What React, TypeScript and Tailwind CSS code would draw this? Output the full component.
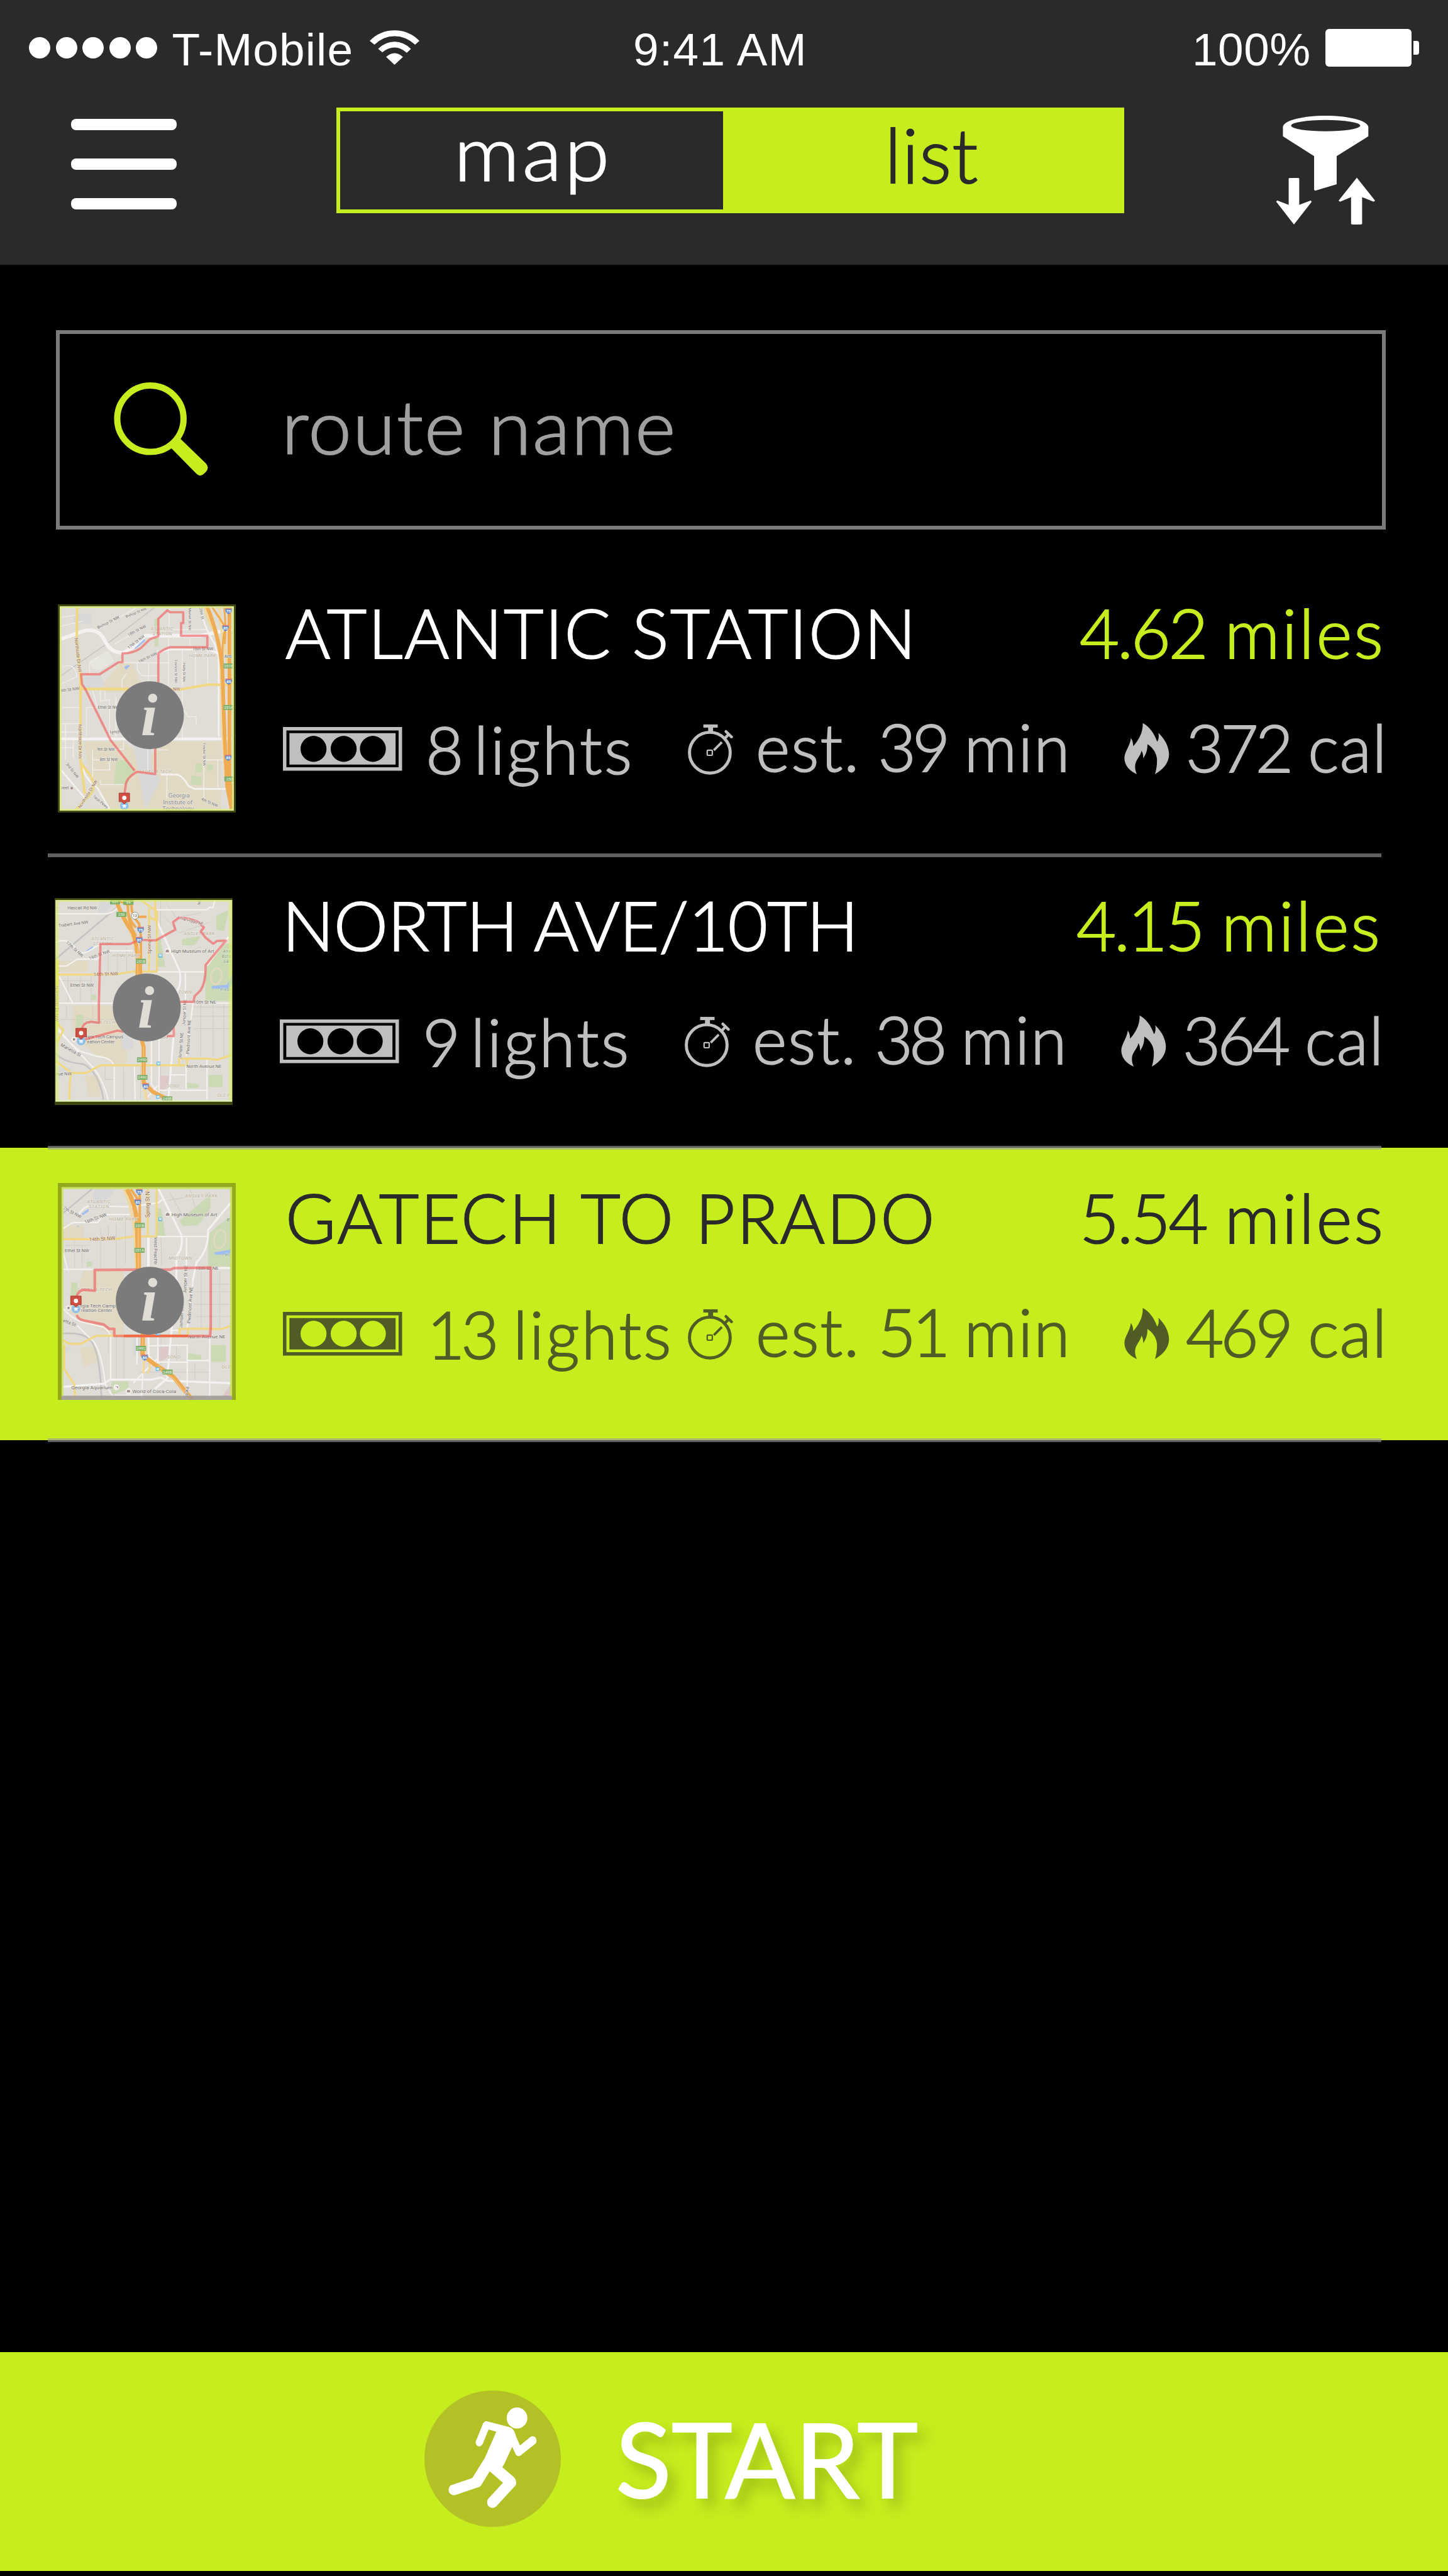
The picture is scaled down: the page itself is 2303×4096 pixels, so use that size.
import React from 'react';

const LATO = 'font-[Lato,sans-serif]';
const THIN = '[-webkit-text-stroke:2px_currentColor]';

/* ---------- icons ---------- */

function Wifi() {
  return (
    <svg className="h-[55px] w-[79px]" viewBox="781 165 106 198" preserveAspectRatio="none" fill="white">
      <path d="M781 226Q803 166 834 166Q865 166 887 226L878 248Q858 199 834 199Q810 199 791 248Z" />
      <path d="M799 272Q815 231 834 231Q853 231 869 272L860 295Q848 264 834 264Q820 264 808 292Z" />
      <path d="M816 318Q825 296 834 296Q843 296 852 318L834 363Z" />
    </svg>
  );
}

function FunnelSort() {
  return (
    <svg className="h-[173px] w-[158px]" viewBox="1209 653 207 614" preserveAspectRatio="none" fill="white">
      <path
        fillRule="evenodd"
        d="M1224 715C1226 680 1265 653 1313 653C1360 653 1400 680 1402 715V769L1336 881V1040L1291 1076L1289 1070V881L1224 769ZM1241 709A72 32 0 0 0 1385 709A72 32 0 0 0 1241 709Z"
      />
      <path d="M1236 1008Q1236 1004 1239 1004H1256Q1258 1004 1258 1008V1156L1282 1131L1284 1138L1247 1267L1210 1138L1212 1131L1236 1156Z" />
      <path d="M1378 1003L1416 1132L1413 1138L1389 1113V1263Q1389 1267 1386 1267H1369Q1366 1267 1366 1263V1113L1343 1138L1340 1132Z" />
    </svg>
  );
}

function Magnifier() {
  return (
    <svg className="h-[151px] w-[151px]" viewBox="245 825 205 205">
      <circle cx="324" cy="903.5" r="71.6" fill="none" stroke="#c6ed1e" strokeWidth="13.6" />
      <path fill="#c6ed1e" d="M389 947L444 1000Q452 1009 444 1018L440 1022Q432 1031 422 1021L369 967Z" />
    </svg>
  );
}

function TrafficLight() {
  return (
    <svg className="h-[69.5px] w-[189.5px]" viewBox="0 0 257 94" fill="currentColor">
      <path
        fillRule="evenodd"
        d="M0 0H257V94H0ZM7.5 7.5V86.5H249.500V7.5ZM14 13H243V81H14ZM38 47A28 28 0 0 0 94 47A28 28 0 0 0 38 47ZM103 47A28 28 0 0 0 159 47A28 28 0 0 0 103 47ZM166 47A28 28 0 0 0 222 47A28 28 0 0 0 166 47Z"
      />
    </svg>
  );
}

function Stopwatch() {
  return (
    <svg className="h-[88.4px] w-[88.4px]" viewBox="0 0 360 360" fill="none" stroke="currentColor">
      <circle cx="171" cy="207" r="132" strokeWidth="20" />
      <path d="M129 34.500H222" strokeWidth="21" />
      <path d="M176 40V75" strokeWidth="32" />
      <path d="M197 191L249 139" strokeWidth="15" />
      <rect x="154" y="191" width="33" height="33" rx="5" strokeWidth="9" />
      <path d="M268 115L291 90" strokeWidth="18" />
      <path d="M275 70L312 105" strokeWidth="18" strokeLinecap="round" />
    </svg>
  );
}

function Flame() {
  return (
    <svg className="h-[91.4px] w-[88.4px]" viewBox="0 0 360 372" fill="currentColor">
      <path d="M153 23C195 45 228 90 246 143C257 130 258 108 254 86C295 125 322 175 323 225C323 280 285 325 232 354C242 325 246 290 245 258C242 215 215 180 183 160C184 195 175 225 156 251C156 232 153 215 145 203C138 240 103 262 103 305C103 325 108 340 115 354C70 335 34 300 34 248C36 205 70 175 76 120C88 138 91 155 91 173C125 135 155 85 153 23Z" />
    </svg>
  );
}

function Runner() {
  return (
    <svg className="h-[217px] w-[217px]" viewBox="82.5 354 369 882" preserveAspectRatio="none">
      <ellipse cx="267" cy="795" rx="184.5" ry="441" fill="#b4c126" />
      <g fill="white">
        <ellipse cx="333" cy="532" rx="28" ry="68" />
        <path d="M250 552L314 592Q326 605 330 650L341 710L369 655Q377 643 383 658Q388 675 384 695L344 772Q337 787 330 770L320 718L298 832L293 850L325 915Q334 940 329 968L276 1105Q267 1122 257 1105Q249 1085 254 1057L295 950L259 876L238 960Q235 975 230 978L166 1030Q155 1034 149 1010Q146 985 153 968L212 920L246 790L277 620L256 606L240 700Q234 720 227 714Q219 700 222 680L241 568Q245 552 250 552Z" />
      </g>
    </svg>
  );
}

/* ---------- map thumbnails ---------- */

const WHITE = '#f3f2f0';
const YELLOW = '#f0d780';
const ORANGE = '#eeab52';

function Road({ d, w = 8, c = WHITE }: { d: string; w?: number; c?: string }) {
  return <path d={d} fill="none" stroke={c} strokeWidth={w} strokeLinejoin="round" />;
}

function Label({ x, y, t, r = 0, s = 26, c = '#6d6a66', i = false }: { x: number; y: number; t: string; r?: number; s?: number; c?: string; i?: boolean }) {
  return (
    <text
      x={x}
      y={y}
      transform={`rotate(${r} ${x} ${y})`}
      fontFamily="Roboto, sans-serif"
      fontSize={s}
      fill={c}
      fontStyle={i ? 'italic' : 'normal'}
      letterSpacing={i ? 2 : 0}
      stroke="#f1efea"
      strokeWidth="4"
      paintOrder="stroke"
    >
      {t}
    </text>
  );
}

function Exit({ x, y, t }: { x: number; y: number; t: string }) {
  return (
    <g>
      <rect x={x - 33} y={y - 16} width="66" height="32" fill="#7fb069" />
      <text x={x} y={y + 9} textAnchor="middle" fontFamily="Roboto, sans-serif" fontSize="25" fill="#f4f7ef">{t}</text>
    </g>
  );
}

function Shield({ x, y, t }: { x: number; y: number; t: string }) {
  return (
    <g>
      <path d={`M${x - 21} ${y - 17}H${x + 21}Q${x + 26} ${y + 8} ${x} ${y + 21}Q${x - 26} ${y + 8} ${x - 21} ${y - 17}Z`} fill="#658ecb" />
      <rect x={x - 20} y={y - 20} width="40" height="7" fill="#dd7d77" />
      <text x={x} y={y + 10} textAnchor="middle" fontFamily="Roboto, sans-serif" fontWeight="700" fontSize="25" fill="#fff">{t}</text>
    </g>
  );
}

function Pin({ x, y }: { x: number; y: number }) {
  return (
    <g>
      <circle cx={x} cy={y + 50} r="28" fill="#8dbfe8" />
      <path d={`M${x} ${y + 34}l5 11 12 1 -9 8 3 12 -11 -6 -11 6 3 -12 -9 -8 12 -1z`} fill="#f0f5fa" />
      <path d={`M${x - 34} ${y - 32}h68v56h-18l-16 16l-16 -16h-18z`} fill="#cf4f42" stroke="#a53c32" strokeWidth="4" />
      <circle cx={x} cy={y - 1} r="14" fill="#fff" />
    </g>
  );
}

function InfoBadge({ x, y }: { x: number; y: number }) {
  return (
    <g>
      <circle cx={x} cy={y} r="220" fill="#7b7b7b" />
      <text x={x - 5} y={y + 131} textAnchor="middle" fontFamily="Liberation Serif, serif" fontStyle="italic" fontWeight="700" fontSize="392" fill="#e0dcd6">i</text>
    </g>
  );
}

function Metro({ x, y }: { x: number; y: number }) {
  return (
    <g>
      <rect x={x - 12} y={y - 12} width="24" height="24" fill="#56b4ea" />
      <text x={x} y={y + 8} textAnchor="middle" fontFamily="Roboto, sans-serif" fontWeight="700" fontSize="20" fill="#fff">M</text>
    </g>
  );
}

const BROWN = '#94683f';
const AREA = '#b5a890';
const ROUTE = 'rgba(240,90,90,0.62)';

function AtlanticMap() {
  return (
    <svg className="block h-[331px] w-[283px]" viewBox="75 72 1151 1349" preserveAspectRatio="none">
      <rect x="75" y="72" width="1151" height="1349" fill="#e0dcd6" />
      <path d="M370 590L480 450H560L600 560L660 610V640H370ZM240 960H500L640 1080L780 960H1130V1400H640L420 1400L300 1230Z" fill="#e2d9c4" />
      <path d="M240 540L350 530L380 590L340 620H240ZM560 960H680V1130L740 1210L640 1400L600 1180ZM180 130H290V200L180 190Z" fill="#d9d8d8" />
      <path d="M455 1085L520 1080L570 1150L520 1240H437ZM700 170L725 160V340L700 345ZM965 1100L1008 1105V1160H965ZM940 1180L1005 1190V1245L935 1240ZM1040 1110Q1090 1100 1080 1140Q1050 1160 1035 1135Z" fill="#cbd9b4" />
      <path d="M275 440L400 375L440 440L350 500L300 490Z" fill="#e6e6df" />
      <path d="M560 345L635 292L640 310L575 362ZM505 480Q520 460 543 467L515 497Z" fill="#a0bdf0" />
      <Road d="M87 540L430 300L710 85" w={6} c="#c6c5c4" />
      <Road d="M87 158L200 140M87 215L240 180M330 235L600 85M440 330L640 215M87 490Q180 430 200 540L87 590M280 520V460L340 410M490 450H790M590 450V500L620 535H720M662 450V620M720 370V450M790 290V600M795 90V220M870 190V250M795 235H1040M930 290V350M1045 350V600M965 380V600M880 370V600M490 620V560L520 520M260 740V930M260 740H330M350 625V700L410 690V930M450 670V930M300 630L330 740M380 630V690M105 740H215M87 845H225M125 845V1080M87 900H210M300 1080H430M300 1010V1210M300 1145H410V1080M350 1210V1240H500M780 1180V1330M720 1015H785M657 1010V1160M1020 960V1330M1020 1080H1145M1110 1080V1260M880 630V950M890 760L920 800H970V850M175 950V1070M87 1000H175M500 960V1010H430" w={6} c="#eeedeb" />
      <Road d="M87 300L240 245Q340 220 380 310Q420 390 500 385L560 350L640 275H1000L1200 230" w={24} />
      <Road d="M87 944H1200" w={17} />
      <Road d="M720 395Q780 360 840 365H1050L1115 390V930M740 1175H850Q890 1190 920 1250L960 1268H1200M87 1135L260 1340M230 1100Q240 1200 330 1260L410 1400M1000 90Q1010 200 1090 330L1110 400" w={11} />
      <Road d="M200 85L198 280L222 540V1090L250 1300M225 1100L285 1180Q330 1260 280 1310L190 1405" w={16} c={YELLOW} />
      <Road d="M230 620H640L860 625L1040 593H1210" w={16} c={YELLOW} />
      <Road d="M1020 85Q1050 200 1120 300Q1130 450 1140 900L1160 1200M1120 90Q1130 300 1210 600" w={16} c="#f1d89d" />
      <Road d="M1040 85Q1120 280 1140 500Q1150 900 1170 1250L1200 1405M1185 85V1200L1205 1400" w={24} c={ORANGE} />
      <Road d="M1070 85L1160 220Q1130 320 1145 480M1150 85Q1165 200 1155 330" w={12} c={ORANGE} />
      <Label x={335} y={232} t="Bishop St NW" r={-27} />
      <Label x={516} y={160} t="Bishop St NW" r={-22} s={24} />
      <Label x={532} y={280} t="18th St NW" r={-28} />
      <Label x={535} y={362} t="17th St NW" r={-38} />
      <Label x={600} y={452} t="16th St NW" r={-25} />
      <Label x={945} y={369} t="16th St NW" s={27} />
      <Label x={677} y={240} t="ATLANTIC" i c={AREA} s={29} />
      <Label x={688} y={270} t="STATION" i c={AREA} s={29} />
      <Label x={925} y={413} t="HOME PARK" i c={AREA} s={29} />
      <Label x={922} y={95} t="Market St NW" r={90} s={24} />
      <Label x={990} y={96} t="20th St" r={80} s={24} />
      <Label x={833} y={432} t="Francis St NW" r={90} s={24} />
      <Label x={886} y={450} t="Holly St NW" r={90} s={24} />
      <Label x={184} y={290} t="Northside Dr NW" r={84} c={BROWN} s={30} />
      <Label x={209} y={850} t="Northside Dr NW" r={90} c={BROWN} s={30} />
      <Label x={222} y={1395} t="Northside Dr NW" r={-58} c={BROWN} s={28} />
      <Label x={92} y={642} t="4th St NW" r={-8} s={28} />
      <Label x={820} y={631} t="NW" c={BROWN} s={28} />
      <Label x={333} y={747} t="Ethel St NW" />
      <Label x={412} y={906} t="Lynch" />
      <Label x={328} y={1021} t="9th St NW" />
      <Label x={346} y={1086} t="8th St NW" />
      <Label x={126} y={1108} t="3rd St NW" r={52} />
      <Label x={300} y={1320} t="Tech Pkwy" r={40} s={25} />
      <Label x={92} y={1271} t="treet" />
      <rect x="158" y="1256" width="14" height="14" fill="#a08a84" />
      <Label x={600} y={1166} t="GEORGIA TECH" i c={AREA} s={28} />
      <Label x={1013} y={970} t="Fowler St NW" r={90} s={25} />
      <Label x={790} y={1325} t="Georgia" s={40} c="#8a8987" />
      <Label x={755} y={1369} t="Institute of" s={40} c="#8a8987" />
      <Label x={750} y={1407} t="Technology" s={40} c="#8a8987" />
      <Label x={1000} y={1340} t="4th St NW" r={24} />
      <Label x={1152} y={417} t="Arts" c="#4b6b80" />
      <path d="M505 1310L515 1235Q520 1200 575 1163L590 1157L705 1172V1010L725 900V390Q770 355 800 350H1042V275H872V193H886V123H800L784 110L725 165V278L670 298L612 355Q560 390 493 390V447H468L345 525H225L232 590L255 625L415 950Q500 1060 572 1150" fill="none" stroke={ROUTE} strokeWidth="15" strokeLinejoin="round" />
      <Shield x={1179} y={115} t="75" />
      <Shield x={1160} y={226} t="85" />
      <Shield x={1180} y={573} t="85" />
      <Shield x={1177} y={1066} t="85" />
      <Exit x={1180} y={471} t="251B" />
      <Exit x={1179} y={740} t="251A" />
      <Exit x={1185} y={1203} t="250" />
      <Pin x={505} y={1327} />
      <rect x="93" y="90" width="1115" height="1313" fill="none" stroke="#dcea86" strokeOpacity="0.85" strokeWidth="12" />
      <rect x="81" y="78" width="1139" height="1337" fill="none" stroke="#3d480d" strokeWidth="12" />
      <InfoBadge x={670} y={790} />
    </svg>
  );
}

function NorthMap() {
  return (
    <svg className="block h-[329px] w-[283px]" viewBox="54 84 1152 1341" preserveAspectRatio="none">
      <rect x="54" y="84" width="1152" height="1341" fill="#e0dcd6" />
      <path d="M80 490H270V560H80ZM170 780H470L520 1030V1160H440L300 1090L170 960ZM250 1230H350V1370H270Z" fill="#e2d9c4" />
      <path d="M345 96H460L370 190H330ZM60 1180H170L60 1280ZM490 880H560V1060H490Z" fill="#d8d8d8" />
      <path d="M1030 560L1060 470L1160 380H1206V750H1030ZM880 350L1000 330L960 390H880ZM1100 200L1180 160L1150 300L1100 290ZM195 840H240V900L190 930ZM1050 1230H1140V1310H1050ZM905 1280L985 1290V1315H905ZM720 350H740L770 530H720ZM290 710H322V745H290Z" fill="#cbd9b4" />
      <path d="M730 1235H795V1300L730 1350Z" fill="#dec9c9" />
      <path d="M1070 655L1170 645L1206 570V640L1180 672H1072ZM257 425L300 395V412L270 430Z" fill="#a0bdf0" />
      <ellipse cx="1100" cy="590" rx="35" ry="52" fill="#cbd9b4" stroke="#e5d9c4" strokeWidth="9" transform="rotate(12 1100 590)" />
      <Road d="M60 480L480 125M60 1090Q110 1150 240 1160Q340 1210 370 1390" w={10} c="#c3c3c3" />
      <Road d="M80 620H290M140 590V760M220 590V760M290 590V760M400 400V560M460 440V560M520 400V560M90 870H480M130 780V870M300 780V870M380 1180V1260H440M500 1180V1390M610 1180V1390M740 1180V1230M950 790H1206M950 850H1206M960 930H1206M1000 770V1110M1080 770V1110M1150 770V1110M560 400L600 480M780 120L840 210L1000 180M760 200L860 310L1060 240M730 850H850M740 90V300M900 440L1000 400" w={4} c="#cfccc4" />
      <Road d="M60 185H400Q450 170 480 120M715 160H1040L1055 145H1080L1090 96M60 370Q140 340 180 400Q220 460 270 430L360 375M68 525H130L200 480H330L380 425H560M715 562H1025M80 585L170 765M80 765H1206M440 1175V1390M570 1175L575 1390M1040 1130V1390M800 1230H905M905 1170V1320M730 1330H1040M730 870V1390M680 1000V1290L720 1340M640 1390L720 1300M75 930Q180 1060 230 1080L330 1110Q420 1120 435 1165M75 940L310 1190Q370 1270 400 1390M900 570V900M950 760L905 1110" w={9} />
      <Road d="M712 225L860 550Q880 640 845 690L830 900L790 1390M1180 335L1040 520" w={13} />
      <Road d="M80 580H440L560 560H715V170L610 96M665 150V560M705 96V230L665 205" w={13} c={YELLOW} />
      <Road d="M60 1140L165 1218H260L350 1168H900M860 1170V1125H1040L1110 1132L1206 1098M150 1390Q150 1260 160 1225M910 1120V1170M75 480V900L110 940L70 1020" w={13} c={YELLOW} />
      <path d="M60 470L75 560V900L60 1020Z" fill="#ece358" />
      <Road d="M500 180Q560 320 590 450V800L625 1000V1280L650 1390" w={18} c="#f1d89d" />
      <Road d="M450 96Q500 230 560 310Q600 420 590 560V900L630 1050V1280L690 1340L790 1390" w={26} c={ORANGE} />
      <Road d="M530 96Q515 220 580 330M560 96Q530 170 600 250L612 330V900M470 100L530 130L560 96M570 205H648M580 275Q540 230 530 180" w={16} c={ORANGE} />
      <Road d="M592 400V600M630 1050V1260" w={3} c="#f7d9a8" />
      <Label x={62} y={158} t="K" i c={AREA} s={28} />
      <Label x={136} y={157} t="Hascall Rd NW" s={29} />
      <Label x={80} y={272} t="Trabert Ave NW" r={-7} s={28} />
      <Label x={292} y={358} t="ATLANTIC" i c={AREA} s={29} />
      <Label x={302} y={388} t="STATION" i c={AREA} s={29} />
      <Label x={125} y={375} t="17th St NW" r={42} s={28} />
      <Label x={280} y={484} t="16th St NW" r={-20} s={28} />
      <Label x={428} y={466} t="HOME PARK" i c={AREA} s={30} />
      <Label x={305} y={590} t="14th St NW" r={-2} c={BROWN} s={32} />
      <Label x={155} y={657} t="Ethel St NW" s={29} />
      <Label x={677} y={446} t="Spring St NW" r={-90} c={BROWN} s={32} />
      <Label x={890} y={325} t="ANSLEY PARK" i c={AREA} s={29} />
      <circle cx="783" cy="427" r="18" fill="#f3efec" />
      <path d="M772 424L783 416L794 424V436H772Z" fill="#a58f89" />
      <Label x={808} y={438} t="High Museum of Art" s={31} />
      <Label x={1144} y={440} t="Atla" i c="#5f8f5a" s={26} />
      <Label x={1136} y={471} t="Bota" i c="#5f8f5a" s={26} />
      <Label x={1146} y={502} t="Gar" i c="#5f8f5a" s={26} />
      <Label x={1126} y={686} t="Piedr" i c="#5f8f7a" s={27} />
      <Label x={855} y={704} t="TOWN" i c={AREA} s={29} />
      <Label x={953} y={767} t="10th St NE" s={31} />
      <Label x={60} y={652} t="Northside Dr NW" r={90} c={BROWN} s={31} />
      <Label x={230} y={898} t="GEORGIA TECH" i c={AREA} s={29} />
      <Label x={258} y={995} t="rgia Tech Campus" s={30} />
      <Label x={264} y={1026} t="eation Center" s={30} />
      <Label x={90} y={1042} t="Marietta St" r={29} s={30} />
      <Label x={899} y={910} t="Juniper St NE" r={-87} s={28} />
      <Label x={873} y={1125} t="Juniper St NE" r={-85} s={28} />
      <Label x={925} y={1095} t="Piedmont Ave NE" r={-87} s={29} />
      <Label x={740} y={998} t="ARE" i c={AREA} s={26} />
      <Label x={907} y={1184} t="North Avenue NE" s={30} />
      <Label x={62} y={1233} t="nue NW" s={29} />
      <Label x={779} y={1311} t="SONO" i c={AREA} s={29} />
      <Label x={1108} y={1371} t="OLD F" i c={AREA} s={27} />
      <Label x={995} y={130} t="NE" r={-78} s={26} />
      <path d="M230 930Q240 890 290 885L340 893V770L350 382H540L600 355L710 358L835 288L820 240L860 210Q930 215 985 240L1020 275L1000 300L1030 340L1080 380L1105 362L1162 360L1030 520Q1035 620 1000 680L960 720L952 757H860L825 850V978H780M250 1000L460 943L500 950" fill="none" stroke={ROUTE} strokeWidth="15" strokeLinejoin="round" />
      <Label x={860} y={222} t="The Prado NE" r={14} s={26} c="#8a5b58" />
      <circle cx="573" cy="198" r="23" fill="#f5f4f2" stroke="#777" strokeWidth="3" />
      <text x="573" y="207" textAnchor="middle" fontFamily="Roboto, sans-serif" fontSize="25" fill="#555">13</text>
      <Shield x={610} y={290} t="75" />
      <Shield x={601} y={355} t="85" />
      <Shield x={643} y={1304} t="85" />
      <Exit x={445} y={109} t="251" />
      <Exit x={531} y={112} t="84" />
      <Exit x={486} y={190} t="250" />
      <Exit x={612} y={493} t="251B" />
      <Exit x={620} y={1132} t="249D" />
      <Exit x={622} y={1246} t="249C" />
      <Exit x={782} y={1385} t="249B" />
      <Metro x={738} y={457} />
      <Metro x={726} y={1156} />
      <Metro x={723} y={1372} />
      <circle cx="179" cy="1000" r="17" fill="#f3efec" />
      <rect x="172" y="993" width="14" height="14" fill="#a08a84" />
      <Pin x={225} y={960} />
      <path d="M60 96H80V1396H60ZM1181 96H1203V1396H1181ZM60 96H1203V108H60Z" fill="#d9f06a" fillOpacity="0.6" />
      <rect x="57" y="1395" width="1149" height="10" fill="#e4f5b4" />
      <path d="M54 84H1206V96H54ZM54 1404H1206V1425H54ZM54 84H59V1425H54ZM1203 84H1206V1425H1203Z" fill="#3d480d" />
      <InfoBadge x={650} y={793} />
    </svg>
  );
}

function GatechMap() {
  return (
    <svg className="block h-[345px] w-[283px]" viewBox="73 66 1151 1404" preserveAspectRatio="none">
      <rect x="73" y="66" width="1151" height="1404" fill="#e0dcd6" />
      <path d="M108 340H240V430H108ZM240 635H500V1050H420L240 960L150 900ZM215 1130H330V1220L240 1260Z" fill="#e2d9c4" />
      <path d="M310 106H450L330 240H290ZM108 1130H170L108 1180ZM560 1060H620V1180H560ZM440 1440H620V1466H440Z" fill="#d8d8d8" />
      <path d="M1045 400L1100 350L1190 280V610H1045ZM860 310L1060 140V230L980 340L880 345ZM715 230H740L770 410H720ZM160 710H200V790L155 800ZM260 575H294V607H260ZM1065 1115H1160V1225H1065ZM915 1165L1000 1180V1212H915ZM420 1350H530V1400L440 1430H420Z" fill="#cbd9b4" />
      <path d="M727 1125H797V1190L727 1225ZM1140 1440L1190 1370V1466Z" fill="#dec9c9" />
      <path d="M1087 515L1190 497V530H1087ZM225 265L272 232V250L235 275ZM195 350L213 337L205 350Z" fill="#a0bdf0" />
      <ellipse cx="1122" cy="430" rx="38" ry="60" fill="#cbd9b4" stroke="#e5d9c4" strokeWidth="9" transform="rotate(12 1122 430)" />
      <Road d="M108 260L300 100M108 1040Q240 1030 290 1090Q350 1180 355 1466" w={10} c="#c3c3c3" />
      <Road d="M120 470H280M180 440V620M230 470V610M350 360V620M400 340V440M450 330V620M510 280V590M400 1060V1170M450 1060V1340M500 1060V1340M740 1060V1330M1060 720H1190M950 770H1190M950 850H1190M960 930H1190M1120 640V1000M1000 640V1000M600 1290H1050M840 1120V1220M960 1230V1340M560 680V900M800 130L870 260M930 110L960 220L1060 250M780 180L1060 130M740 420L745 600" w={4} c="#cfccc4" />
      <Road d="M108 360L170 322H330L370 270H540M205 280Q240 200 320 215L545 220L720 195L755 170M700 412H1045M108 625H300M108 520L135 625M585 1060V1240M655 420V620M720 1060V1230M108 880Q180 960 250 970L370 1000Q400 1020 412 1050M200 990L310 1100Q360 1180 380 1370L440 1466M415 1060V1335M660 1120L910 1115M715 1225H910M910 1110V1466M1055 1060V1466M910 1215H1055M905 420V700M950 680L910 1000M560 1360L720 1200M440 1440H620M800 1020H860M625 1240L615 1466" w={9} />
      <Road d="M725 106L870 400Q890 480 840 540V700L810 1000L780 1330L700 1400M1190 195L1045 370Q1050 500 970 580L945 700M1055 616H1190M108 1385L370 1365L410 1338H680L740 1325L780 1345L1190 1362M660 420V1190L720 1240" w={13} />
      <Road d="M108 430H440L560 412H712V106M655 106V410" w={13} c={YELLOW} />
      <Road d="M108 1085L150 1107H220L320 1055H900M860 1060V1010H1050L1130 1012L1190 992M115 1110V1270L180 1370L185 1466M915 1005V1060" w={13} c={YELLOW} />
      <Road d="M500 106Q560 240 570 420L600 1000M640 1100L625 1300M650 1300Q680 1270 660 1200" w={14} c="#f1d89d" />
      <Road d="M520 106Q575 200 585 320L593 620L625 950L620 1180L700 1240L820 1320L940 1466" w={28} c={ORANGE} />
      <Road d="M603 106V620M545 106L590 170" w={16} c={ORANGE} />
      <Road d="M594 320V620M622 1050V1160M720 1250L830 1340L890 1420" w={3} c="#f7e0b8" />
      <Label x={262} y={195} t="ATLANTIC" i c={AREA} s={31} />
      <Label x={272} y={227} t="STATION" i c={AREA} s={31} />
      <Label x={895} y={161} t="ANSLEY PARK" i c={AREA} s={31} />
      <Label x={105} y={235} t="7th St NW" r={28} s={29} />
      <Label x={250} y={330} t="16th St NW" r={-20} s={30} />
      <Label x={406} y={309} t="HOME PARK" i c={AREA} s={31} />
      <Label x={275} y={443} t="14th St NW" r={-3} c={BROWN} s={34} />
      <Label x={118} y={512} t="Ethel St NW" s={30} />
      <Label x={667} y={290} t="Spring St N" r={-90} c={BROWN} s={34} />
      <Label x={697} y={416} t="West Peachtr" r={90} s={30} />
      <circle cx="783" cy="269" r="18" fill="#f3efec" />
      <path d="M771 266L783 257L795 266V279H771Z" fill="#a58f89" />
      <Label x={808} y={280} t="High Museum of Art" s={33} />
      <Label x={790} y={563} t="MIDTOWN" i c={AREA} s={31} />
      <Label x={1155} y={543} t="Pi" i c="#5f8f7a" s={31} />
      <Label x={1165} y={315} t="B" i c="#5f8f5a" s={31} />
      <Label x={198} y={767} t="GEORGIA TECH" i c={AREA} s={30} />
      <Label x={218} y={870} t="rgia Tech Camp" s={33} />
      <Label x={224} y={902} t="reation Center" s={32} />
      <Label x={105} y={963} t="etta St" r={22} s={30} />
      <Label x={903} y={780} t="Juniper St NE" r={-87} s={30} />
      <Label x={877} y={1005} t="Juniper St" r={-86} s={30} />
      <Label x={930} y={976} t="Piedmont Ave NE" r={-86} s={31} />
      <Label x={779} y={1203} t="SONO" i c={AREA} s={31} />
      <Label x={1132} y={1268} t="OLD" i c={AREA} s={31} />
      <Label x={160} y={1400} t="Georgia Aquarium" s={33} />
      <circle cx="452" cy="1388" r="19" fill="#f3efec" />
      <path d="M442 1380L462 1384L464 1396L454 1386Z" fill="#8a7a76" />
      <circle cx="530" cy="1413" r="19" fill="#f3efec" />
      <rect x="520" y="1406" width="20" height="15" fill="#a58f89" />
      <Label x={555} y={1425} t="World of Coca-Cola" s={33} />
      <Label x={897} y={1385} t="Piedn" r={90} s={28} />
      <Label x={963} y={628} t="10th St NE" s={32} />
      <Label x={915} y={1070} t="North Avenue NE" s={32} />
      <path d="M195 800Q205 765 240 757L312 763V629L560 627H800L825 617L1062 614V1000L1058 1056H438V1010H405L370 982L240 955Q205 950 195 920" fill="none" stroke={ROUTE} strokeWidth="17" strokeLinejoin="round" />
      <path d="M500 1056H915" stroke="#f26a45" strokeWidth="17" />
      <Shield x={600} y={124} t="75" />
      <Shield x={590} y={190} t="85" />
      <Shield x={635} y={1196} t="85" />
      <Exit x={602} y={340} t="251B" />
      <Exit x={601} y={502} t="251A" />
      <Exit x={611} y={1136} t="249C" />
      <Exit x={782} y={1289} t="249B" />
      <Metro x={735} y={300} />
      <Metro x={718} y={1270} />
      <Metro x={721} y={1040} />
      <circle cx="142" cy="875" r="17" fill="#f3efec" />
      <rect x="135" y="868" width="14" height="14" fill="#a08a84" />
      <Pin x={190} y={830} />
      <path d="M97 1443H1200V1470H97Z" fill="#9d9794" fillOpacity="0.85" />
      <path d="M97 92H1200V1443H1188V105H108V1443H97Z" fill="#c9e35a" />
      <path d="M73 66H1224V1470H1200V92H97V1470H73Z" fill="#94a81b" />
      <InfoBadge x={668} y={828} />
    </svg>
  );
}

/* ---------- rows ---------- */

type Route = {
  name: string;
  miles: string;
  lights: string;
  time: string;
  cal: string;
  map: React.ReactNode;
  row: string;
  nameStyle: string;
  milesStyle: string;
  meta: string;
  mapStyle: string;
  lightsStyle: string;
};

const routes: Route[] = [
  {
    name: 'ATLANTIC STATION', miles: '4.62 miles', lights: '8 lights', time: 'est. 39 min', cal: '372 cal',
    map: <AtlanticMap />, row: 'pl-[92px]', nameStyle: 'text-white tracking-[2.3px]', milesStyle: 'text-[#c6ed1e]',
    meta: 'text-[#bfbfbf]', mapStyle: 'mt-[66px]', lightsStyle: '[word-spacing:-6px]',
  },
  {
    name: 'NORTH AVE/10TH', miles: '4.15 miles', lights: '9 lights', time: 'est. 38 min', cal: '364 cal',
    map: <NorthMap />, row: 'pl-[87px]', nameStyle: 'text-white tracking-[-0.5px]', milesStyle: 'text-[#c6ed1e]',
    meta: 'text-[#bfbfbf]', mapStyle: 'mt-[68px]', lightsStyle: '[word-spacing:-6px]',
  },
  {
    name: 'GATECH TO PRADO', miles: '5.54 miles', lights: '13 lights', time: 'est. 51 min', cal: '469 cal',
    map: <GatechMap />, row: 'pl-[92px] bg-[#c6ed1e]', nameStyle: 'text-[#2a2a2a] tracking-[2.7px]', milesStyle: 'text-[#2a2a2a]',
    meta: 'text-[#515b26]', mapStyle: 'mt-[56px]', lightsStyle: 'pl-[2px]',
  },
];

/* Sets figures tighter than words. */
function Measure({ text, figures, words }: { text: string; figures: string; words: string }) {
  return (
    <>
      {text.split(' ').map((part, n) => (
        <React.Fragment key={n}>
          {n > 0 && ' '}
          <span className={/\d/.test(part) ? figures : words}>{part}</span>
        </React.Fragment>
      ))}
    </>
  );
}

function RouteRow({ r }: { r: Route }) {
  return (
    <li className={`relative flex h-[465px] items-start ${r.row}`}>
      <div className={`w-[358px] shrink-0 ${r.mapStyle}`}>{r.map}</div>
      <div className={`w-[1753px] shrink-0 whitespace-nowrap ${LATO} font-light ${THIN}`}>
        <div className="mt-[55px] flex h-[109px] text-[109px] leading-none">
          <div className={`w-[1267px] pl-[4px] ${r.nameStyle}`}>{r.name}</div>
          <div className={r.milesStyle}>
            <Measure text={r.miles} figures="tracking-[-3.5px]" words="tracking-[3.2px]" />
          </div>
        </div>
        <div className={`mt-[70px] grid grid-cols-[227px_410px_114px_579px_106px_auto] items-start text-[104px] leading-none ${r.meta}`}>
          <div className="mt-[27px]"><TrafficLight /></div>
          <div className={`mt-[10px] ${r.lightsStyle}`}>
            <Measure text={r.lights} figures="tracking-[-6px]" words="tracking-[3.2px]" />
          </div>
          <div className="mt-[17px]"><Stopwatch /></div>
          <div className="mt-[6px] pl-[1px]">
            <Measure text={r.time} figures="tracking-[-6px]" words="tracking-[2px]" />
          </div>
          <div className="mt-[15px]"><Flame /></div>
          <div className="mt-[7px]">
            <Measure text={r.cal} figures="tracking-[-5px]" words="tracking-[1.5px]" />
          </div>
        </div>
      </div>
      <div className="absolute bottom-[-3px] left-[76px] z-10 h-[6px] w-[2121px] bg-[#979c99]/62" />
    </li>
  );
}

export default function App() {
  return (
    <div className="flex h-[4096px] w-[2303px] flex-col overflow-hidden bg-black">
      <header className="h-[421px] shrink-0 bg-[#2a2a2a] text-white">
        <div className="flex h-[152px] items-center whitespace-nowrap font-['Liberation_Sans',Arial,sans-serif] text-[73px] leading-none">
          <div className="flex w-[1007px] items-center pl-[46px]">
            <div className="flex gap-[8.6px]">
              {[0, 1, 2, 3, 4].map((n) => (
                <span key={n} className="size-[34px] rounded-full bg-white" />
              ))}
            </div>
            <span className="ml-[23px] pt-[5px] tracking-[1.1px]">T-Mobile</span>
            <span className="ml-[26px] -mt-[2px]"><Wifi /></span>
          </div>
          <div className="w-[889px] pt-[5px] tracking-[1.3px]">9:41 AM</div>
          <div className="w-[212px] pt-[5px] tracking-[0.5px]">100%</div>
          <div className="flex items-center gap-[3px]">
            <span className="h-[60px] w-[137px] rounded-[6px] bg-white" />
            <span className="h-[22px] w-[9px] rounded-r-[4px] bg-white" />
          </div>
        </div>
        <nav className="flex items-start pl-[113px]">
          <div className="mt-[37px] flex w-[168px] flex-col gap-[45px]">
            <span className="h-[18px] rounded-[8px] bg-white" />
            <span className="h-[18px] rounded-[8px] bg-white" />
            <span className="h-[18px] rounded-[8px] bg-white" />
          </div>
          <div className={`ml-[254px] mt-[19px] flex h-[168px] w-[1253px] border-[6px] border-[#c6ed1e] text-[120px] leading-none ${LATO} font-light ${THIN}`}>
            <div className="w-[609px] pl-[181px] pt-[4px]">
              <span className="inline-block origin-left scale-x-[1.08] tracking-[4px]">map</span>
            </div>
            <div className="flex-1 bg-[#c6ed1e] pl-[257px] pt-[8px] tracking-[1px] text-[#2a2a2a]">list</div>
          </div>
          <div className="ml-[241px] mt-[32px]"><FunnelSort /></div>
        </nav>
      </header>

      <div className="ml-[89px] mt-[104px] flex h-[317px] w-[2115px] shrink-0 items-start border-[6px] border-[#7b7b7b] pl-[86px]">
        <div className="mt-[77px]"><Magnifier /></div>
        <div className={`ml-[116px] mt-[87px] origin-left scale-x-[1.045] text-[118px] leading-none tracking-[2px] text-[#9fa09f] ${LATO} font-light ${THIN}`}>route name</div>
      </div>

      <ul className="mt-[53px] shrink-0">
        {routes.map((r) => (
          <RouteRow key={r.name} r={r} />
        ))}
      </ul>

      <button className="mb-[8px] mt-auto flex h-[348px] shrink-0 items-start bg-[#c6ed1e] pl-[675px]">
        <span className="mt-[61px]"><Runner /></span>
        <span className={`ml-[87px] mt-[87px] text-[164px] leading-none text-white [-webkit-text-stroke:2px_white] ${LATO} [text-shadow:12px_14px_20px_rgba(60,80,0,0.3)]`}>START</span>
      </button>
    </div>
  );
}
